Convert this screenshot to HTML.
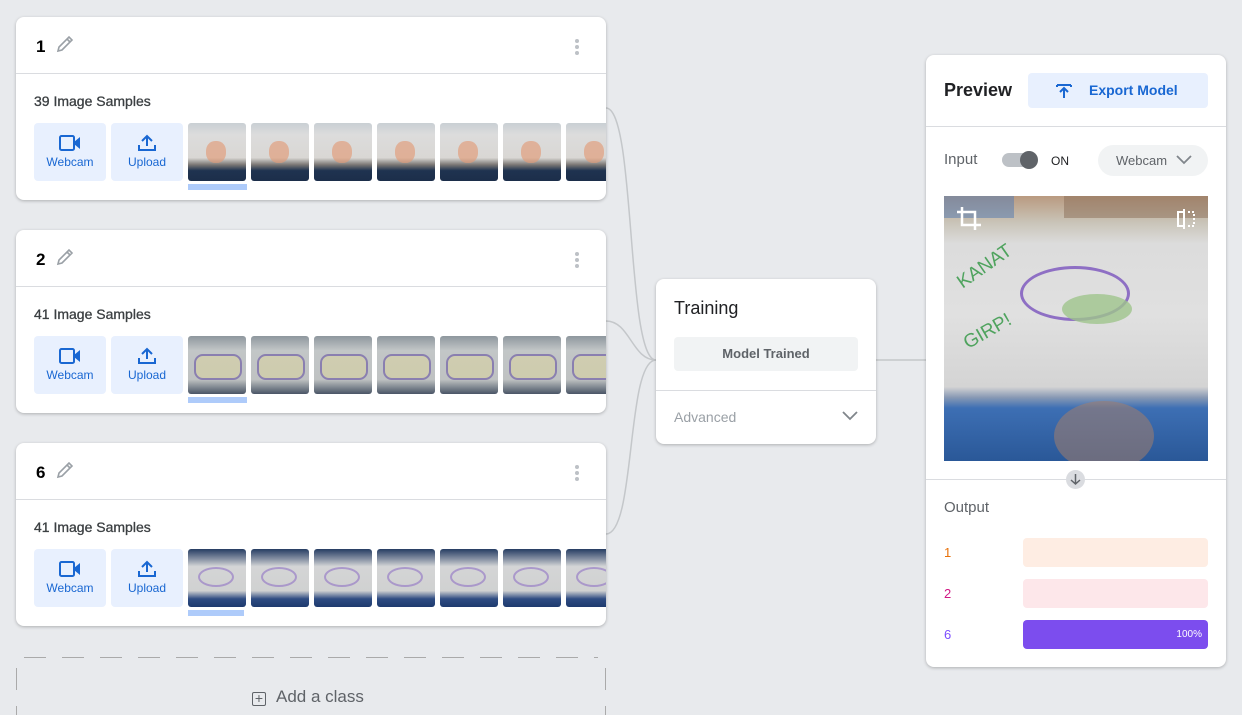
<!DOCTYPE html>
<html><head><style>
*{box-sizing:border-box;margin:0;padding:0}
body{width:1242px;height:715px;background:#e8eaed;font-family:"Liberation Sans",sans-serif;position:relative;overflow:hidden;color:#202124}
.card{position:absolute;background:#fff;border-radius:8px;box-shadow:0 1px 3px rgba(0,0,0,.25)}
.cls{left:16px;width:590px;height:183px;overflow:hidden}
.cls .hd{height:57px;border-bottom:1px solid #dadce0;position:relative}
.cls .num{position:absolute;left:20px;top:20px;font-size:17px;font-weight:bold;color:#000}
.cls .pen{position:absolute;left:38px;top:16px}
.cls .dots{position:absolute;right:27px;top:22px;width:4px}
.cls .dots i{display:block;width:4px;height:4px;border-radius:2px;background:#bdc1c6;margin-bottom:2px}
.cls .cnt{position:absolute;left:18px;top:76px;font-size:14px;color:#3c4043;-webkit-text-stroke:.3px #3c4043}
.btn{position:absolute;top:106px;width:72px;height:58px;background:#e8f0fe;border-radius:4px;color:#1967d2;font-size:12px;text-align:center}
.btn svg{display:block;margin:11px auto 3px}
.th{position:absolute;top:106px;width:58px;height:58px;border-radius:3px;overflow:hidden}
.ul{position:absolute;left:172px;top:167px;width:59px;height:6px;background:#aecbfa}
.t1{background:linear-gradient(180deg,#c9cfd4 0%,#dcdcdc 20%,#d9d7d4 60%,#7a7774 72%,#1f3350 82%,#1c2e4a 100%)}
.t1::after{content:"";position:absolute;left:18px;top:18px;width:20px;height:22px;border-radius:45%;background:#e29b78;opacity:.65}
.t2{background:linear-gradient(180deg,#8e979e 0%,#c2c6c7 25%,#bfc2c2 75%,#4a5566 100%)}
.t2::after{content:"";position:absolute;left:6px;top:18px;width:44px;height:22px;border-radius:9px;border:2px solid #8a7fb0;background:rgba(225,215,150,.45)}
.t3{background:linear-gradient(180deg,#263d63 0%,#8a94a6 18%,#d4d5d6 30%,#d0d1d1 72%,#2e4c82 86%,#1e3a6e 100%)}
.t3::after{content:"";position:absolute;left:10px;top:18px;width:32px;height:16px;border-radius:50%;border:2px solid #a08ac8;opacity:.8}
</style></head><body>

<svg style="position:absolute;left:0;top:0" width="1242" height="715">
<g fill="none" stroke="#c4c7ca" stroke-width="1.5">
<path d="M606 108 C636 108 626 360 656 360"/>
<path d="M606 321 C630 321 632 360 656 360"/>
<path d="M606 534 C636 534 626 360 656 360"/>
<path d="M876 360 L926 360"/>
</g>
<path d="M24 657.5 H598" stroke="#aaa" stroke-width="1" stroke-dasharray="22 16"/>
<path d="M16.5 668 V715 M605.5 668 V715" stroke="#aaa" stroke-width="1" stroke-dasharray="22 16"/>
</svg>

<div class="card cls" style="top:17px">
 <div class="hd"><span class="num">1</span>
 <svg class="pen" width="22" height="22" viewBox="0 0 22 22"><path d="M4 18 L5 14 L15 4 L18 7 L8 17 Z M13 6 L16 9" fill="none" stroke="#9aa0a6" stroke-width="1.6"/></svg>
 <div class="dots"><i></i><i></i><i></i></div></div>
 <div class="cnt">39 Image Samples</div>
 <div class="btn" style="left:18px"><svg width="22" height="18" viewBox="0 0 22 18"><rect x="1" y="2" width="14" height="14" rx="1.5" fill="none" stroke="#1967d2" stroke-width="2"/><path d="M15 8 L21 3 V15 L15 10Z" fill="#1967d2"/></svg>Webcam</div>
 <div class="btn" style="left:95px"><svg width="20" height="18" viewBox="0 0 20 18"><path d="M10 12 V2 M5 7 L10 2 L15 7 M2 11 V16 H18 V11" fill="none" stroke="#1967d2" stroke-width="2"/></svg>Upload</div>
 <div class="th t1" style="left:172px"></div><div class="th t1" style="left:235px"></div><div class="th t1" style="left:298px"></div><div class="th t1" style="left:361px"></div><div class="th t1" style="left:424px"></div><div class="th t1" style="left:487px"></div><div class="th t1" style="left:550px"></div>
 <div class="ul"></div>
</div>

<div class="card cls" style="top:230px">
 <div class="hd"><span class="num">2</span>
 <svg class="pen" width="22" height="22" viewBox="0 0 22 22"><path d="M4 18 L5 14 L15 4 L18 7 L8 17 Z M13 6 L16 9" fill="none" stroke="#9aa0a6" stroke-width="1.6"/></svg>
 <div class="dots"><i></i><i></i><i></i></div></div>
 <div class="cnt">41 Image Samples</div>
 <div class="btn" style="left:18px"><svg width="22" height="18" viewBox="0 0 22 18"><rect x="1" y="2" width="14" height="14" rx="1.5" fill="none" stroke="#1967d2" stroke-width="2"/><path d="M15 8 L21 3 V15 L15 10Z" fill="#1967d2"/></svg>Webcam</div>
 <div class="btn" style="left:95px"><svg width="20" height="18" viewBox="0 0 20 18"><path d="M10 12 V2 M5 7 L10 2 L15 7 M2 11 V16 H18 V11" fill="none" stroke="#1967d2" stroke-width="2"/></svg>Upload</div>
 <div class="th t2" style="left:172px"></div><div class="th t2" style="left:235px"></div><div class="th t2" style="left:298px"></div><div class="th t2" style="left:361px"></div><div class="th t2" style="left:424px"></div><div class="th t2" style="left:487px"></div><div class="th t2" style="left:550px"></div>
 <div class="ul"></div>
</div>

<div class="card cls" style="top:443px">
 <div class="hd"><span class="num">6</span>
 <svg class="pen" width="22" height="22" viewBox="0 0 22 22"><path d="M4 18 L5 14 L15 4 L18 7 L8 17 Z M13 6 L16 9" fill="none" stroke="#9aa0a6" stroke-width="1.6"/></svg>
 <div class="dots"><i></i><i></i><i></i></div></div>
 <div class="cnt">41 Image Samples</div>
 <div class="btn" style="left:18px"><svg width="22" height="18" viewBox="0 0 22 18"><rect x="1" y="2" width="14" height="14" rx="1.5" fill="none" stroke="#1967d2" stroke-width="2"/><path d="M15 8 L21 3 V15 L15 10Z" fill="#1967d2"/></svg>Webcam</div>
 <div class="btn" style="left:95px"><svg width="20" height="18" viewBox="0 0 20 18"><path d="M10 12 V2 M5 7 L10 2 L15 7 M2 11 V16 H18 V11" fill="none" stroke="#1967d2" stroke-width="2"/></svg>Upload</div>
 <div class="th t3" style="left:172px"></div><div class="th t3" style="left:235px"></div><div class="th t3" style="left:298px"></div><div class="th t3" style="left:361px"></div><div class="th t3" style="left:424px"></div><div class="th t3" style="left:487px"></div><div class="th t3" style="left:550px"></div>
 <div class="ul" style="width:56px"></div>
</div>

<div style="position:absolute;left:252px;top:687px;font-size:17px;color:#5f6368"><span style="display:inline-block;width:14px;height:14px;border:1.5px solid #5f6368;border-radius:2px;vertical-align:-1px;margin-right:10px;text-align:center;line-height:10px;font-size:14px">+</span>Add a class</div>

<div class="card" style="left:656px;top:279px;width:220px;height:165px">
 <div style="position:absolute;left:18px;top:19px;font-size:18px;color:#202124">Training</div>
 <div style="position:absolute;left:18px;top:58px;width:184px;height:34px;background:#f1f3f4;border-radius:4px;text-align:center;line-height:34px;font-size:13px;font-weight:bold;color:#5f6368">Model Trained</div>
 <div style="position:absolute;left:0;top:111px;width:220px;border-top:1px solid #dadce0"></div>
 <div style="position:absolute;left:18px;top:130px;font-size:14px;color:#9aa0a6">Advanced</div>
 <svg style="position:absolute;left:186px;top:132px" width="16" height="10" viewBox="0 0 16 10"><path d="M1 1 L8 8 L15 1" fill="none" stroke="#80868b" stroke-width="1.8"/></svg>
</div>

<div class="card" style="left:926px;top:55px;width:300px;height:612px">
 <div style="position:absolute;left:18px;top:25px;font-size:18px;font-weight:bold;color:#202124">Preview</div>
 <div style="position:absolute;left:102px;top:18px;width:180px;height:35px;background:#e8f0fe;border-radius:4px;color:#1967d2;font-size:14px;font-weight:bold;line-height:35px">
  <svg style="position:absolute;left:28px;top:10px" width="16" height="16" viewBox="0 0 16 16"><path d="M1 2 H15 M1 2 V4 M15 2 V4 M8 15 V6 M4 9 L8 5 L12 9" fill="none" stroke="#1967d2" stroke-width="2"/></svg>
  <span style="position:absolute;left:61px">Export Model</span></div>
 <div style="position:absolute;left:0;top:71px;width:300px;border-top:1px solid #dadce0"></div>
 <div style="position:absolute;left:18px;top:96px;font-size:15px;color:#5f6368">Input</div>
 <div style="position:absolute;left:76px;top:98px;width:34px;height:14px;border-radius:7px;background:#bdc1c6"></div>
 <div style="position:absolute;left:94px;top:96px;width:18px;height:18px;border-radius:9px;background:#5f6368"></div>
 <div style="position:absolute;left:125px;top:99px;font-size:12px;color:#202124">ON</div>
 <div style="position:absolute;left:172px;top:90px;width:110px;height:31px;border-radius:16px;background:#f1f3f4;font-size:13px;color:#5f6368;line-height:31px;padding-left:18px">Webcam
  <svg style="position:absolute;left:78px;top:10px" width="16" height="10" viewBox="0 0 16 10"><path d="M1 1 L8 8 L15 1" fill="none" stroke="#80868b" stroke-width="1.8"/></svg></div>
 <div style="position:absolute;left:18px;top:141px;width:264px;height:265px;overflow:hidden;background:linear-gradient(180deg,#b99a80 0%,#c9c4b8 10%,#dcdcdc 18%,#e0e0e0 45%,#d4d4d4 72%,#8899b4 76%,#3d6fb4 80%,#2a5898 100%)">
  <div style="position:absolute;left:0;top:0;width:70px;height:22px;background:#5a7eb0;opacity:.55"></div>
  <div style="position:absolute;left:120px;top:0;width:144px;height:22px;background:#8a6e58;opacity:.5"></div>
  <div style="position:absolute;left:110px;top:205px;width:100px;height:70px;border-radius:50%;background:#a37e6c;opacity:.55"></div>
  <div style="position:absolute;left:76px;top:70px;width:110px;height:55px;border-radius:50%;border:3px solid #8e6fc4"></div>
  <div style="position:absolute;left:118px;top:98px;width:70px;height:30px;border-radius:50%;background:#9fc48c;opacity:.8"></div>
  <div style="position:absolute;left:10px;top:60px;font-size:19px;color:#4fa35e;transform:rotate(-35deg)">KANAT</div>
  <div style="position:absolute;left:18px;top:125px;font-size:19px;color:#4fa35e;transform:rotate(-30deg)">GIRP!</div>
  <svg style="position:absolute;left:12px;top:10px" width="26" height="26" viewBox="0 0 26 26"><path d="M6 1 V19 H25 M1 6 H19 V24" fill="none" stroke="#fff" stroke-width="2.5"/></svg>
  <svg style="position:absolute;left:232px;top:12px" width="20" height="22" viewBox="0 0 20 22"><path d="M8 1 V21 M8 4 H2 V18 H8" fill="none" stroke="#fff" stroke-width="2"/><path d="M12 4 H18 V18 H12" fill="none" stroke="#fff" stroke-width="2" stroke-dasharray="2 2"/></svg>
 </div>
 <div style="position:absolute;left:0;top:424px;width:300px;border-top:1px solid #dadce0"></div>
 <div style="position:absolute;left:140px;top:415px;width:19px;height:19px;border-radius:10px;background:#dadce0"></div>
 <svg style="position:absolute;left:143px;top:418px" width="13" height="13" viewBox="0 0 13 13"><path d="M6.5 1 V11 M2 7 L6.5 11 L11 7" fill="none" stroke="#5f6368" stroke-width="1.5"/></svg>
 <div style="position:absolute;left:18px;top:444px;font-size:15px;color:#5f6368">Output</div>
 <div style="position:absolute;left:18px;top:490px;font-size:13px;color:#e8710a">1</div>
 <div style="position:absolute;left:97px;top:483px;width:185px;height:29px;border-radius:4px;background:#feede3"></div>
 <div style="position:absolute;left:18px;top:531px;font-size:13px;color:#d01884">2</div>
 <div style="position:absolute;left:97px;top:524px;width:185px;height:29px;border-radius:4px;background:#fde7ea"></div>
 <div style="position:absolute;left:18px;top:572px;font-size:13px;color:#7c4dff">6</div>
 <div style="position:absolute;left:97px;top:565px;width:185px;height:29px;border-radius:4px;background:#7c4dee;color:#fff;font-size:10px;text-align:right;padding-right:6px;line-height:29px">100%</div>
</div>
</body></html>
